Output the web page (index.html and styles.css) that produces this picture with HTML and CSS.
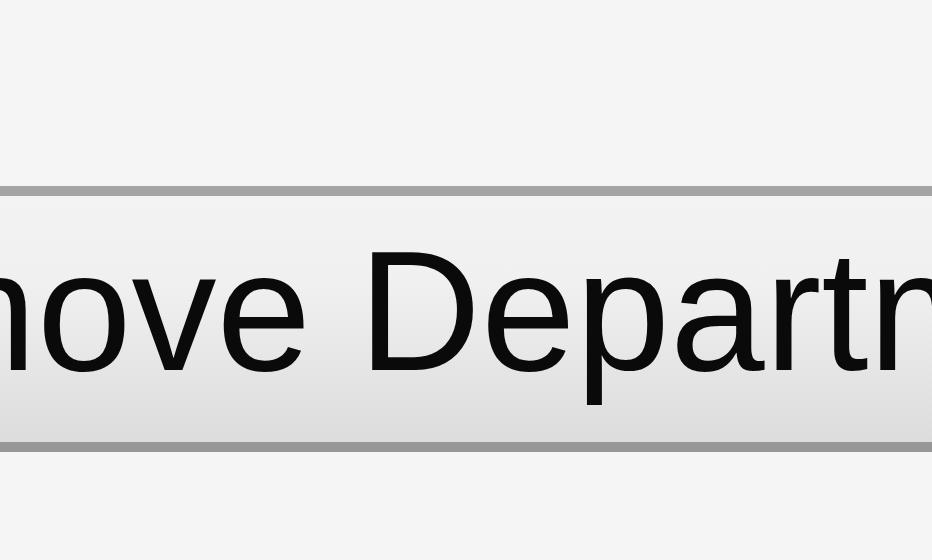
FILE: index.html
```html
<!DOCTYPE html>
<html>
<head>
<meta charset="utf-8">
<link rel="stylesheet" href="styles.css">
</head>
<body>
<div class="stage">
  <div class="btn">Remove Department</div>
</div>
</body>
</html>
```

FILE: styles.css
```css
html, body {
  margin: 0;
  padding: 0;
  background: #f5f5f5;
  overflow: hidden;
}
.stage {
  width: 932px;
  height: 560px;
  overflow: hidden;
  padding-top: 186px;
  box-sizing: border-box;
}
.btn {
  display: flex;
  align-items: flex-start;
  width: 1400px;
  margin-left: -340px;
  padding: 30px 0 46px 18px;
  height: 170px;
  border-top: 10px solid #a4a4a4;
  border-bottom: 10px solid #979797;
  background: linear-gradient(#f3f3f3 0%, #f0f0f0 35%, #dcdcdc 100%);
  font-family: "Liberation Sans", Arial, sans-serif;
  font-size: 170px;
  line-height: 170px;
  color: #0a0a0a;
  white-space: nowrap;
}
```
